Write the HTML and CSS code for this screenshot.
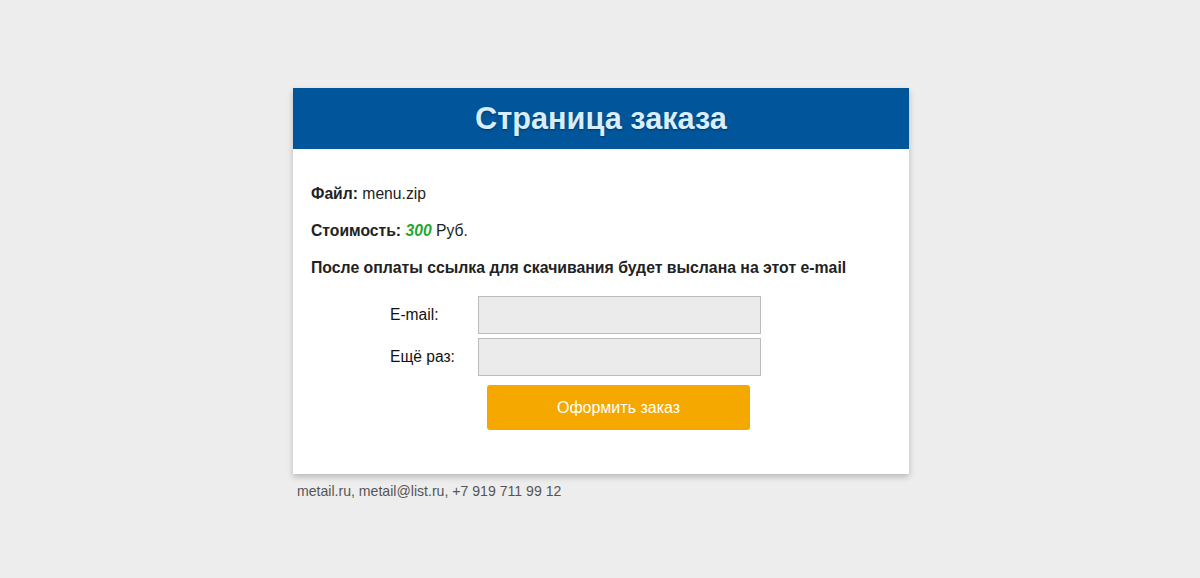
FILE: index.html
```html
<!DOCTYPE html>
<html lang="ru">
<head>
<meta charset="utf-8">
<title>Страница заказа</title>
<link rel="stylesheet" href="styles.css">
</head>
<body>
<div class="wrap">
  <div class="card">
    <div class="card-head"><h1>Страница заказа</h1></div>
    <div class="card-body">
      <p><b>Файл:</b> menu.zip</p>
      <p><b>Стоимость:</b> <b class="price">300</b> Руб.</p>
      <p><b class="wide">После оплаты ссылка для скачивания будет выслана на этот e-mail</b></p>
      <form class="order-form">
        <label class="lbl" for="em1">E-mail:</label>
        <input class="inp" id="em1" type="text">
        <label class="lbl" for="em2">Ещё раз:</label>
        <input class="inp" id="em2" type="text">
        <span></span>
        <div class="btn-cell"><button type="button" class="btn">Оформить заказ</button></div>
      </form>
    </div>
  </div>
  <div class="footer">metail.ru, metail@list.ru, +7 919 711 99 12</div>
</div>
</body>
</html>
```

FILE: styles.css
```css
html, body {
  margin: 0;
  padding: 0;
  background: #ededed;
  font-family: "Liberation Sans", Arial, sans-serif;
  color: #222;
}
body {
  padding-left: 2px;
}
.wrap {
  width: 616px;
  margin: 88px auto 0;
}
.card {
  background: #fff;
  box-shadow: 0 3px 6px rgba(0,0,0,0.22);
}
.card-head {
  background: #01559a;
  height: 61px;
  display: flex;
  align-items: center;
  justify-content: center;
}
.card-head h1 {
  margin: 0;
  font-size: 30.7px;
  font-weight: bold;
  color: #d8eefc;
  text-shadow: 0 1px 2px rgba(0,0,0,0.35);
  line-height: 36px;
}
.card-body {
  padding: 36px 18px 44px;
}
.card-body p {
  margin: 0 0 19px;
  font-size: 15.7px;
  line-height: 18px;
}
.wide {
  font-size: 15.8px;
}
.price {
  color: #22a82b;
  font-style: italic;
}
.order-form {
  display: grid;
  grid-template-columns: 88px 283px;
  row-gap: 4px;
  margin-left: 79px;
  align-items: center;
}
.lbl {
  font-size: 15.6px;
  line-height: 18px;
  color: #111;
}
.inp {
  box-sizing: border-box;
  height: 38px;
  width: 283px;
  border: 1px solid #bbb;
  background: #ebebeb;
  margin: 0;
  padding: 0 8px;
  font: 15px "Liberation Sans", Arial, sans-serif;
}
.btn-cell {
  display: flex;
  justify-content: center;
  padding-top: 5px;
}
.btn {
  width: 263px;
  height: 45px;
  background: #f5a800;
  border: none;
  border-radius: 3px;
  color: #fff;
  font: 16px "Liberation Sans", Arial, sans-serif;
  margin-left: -2px;
}
.footer {
  padding: 8px 0 0 4px;
  font-size: 14.1px;
  line-height: 18px;
  color: #555;
}
```
